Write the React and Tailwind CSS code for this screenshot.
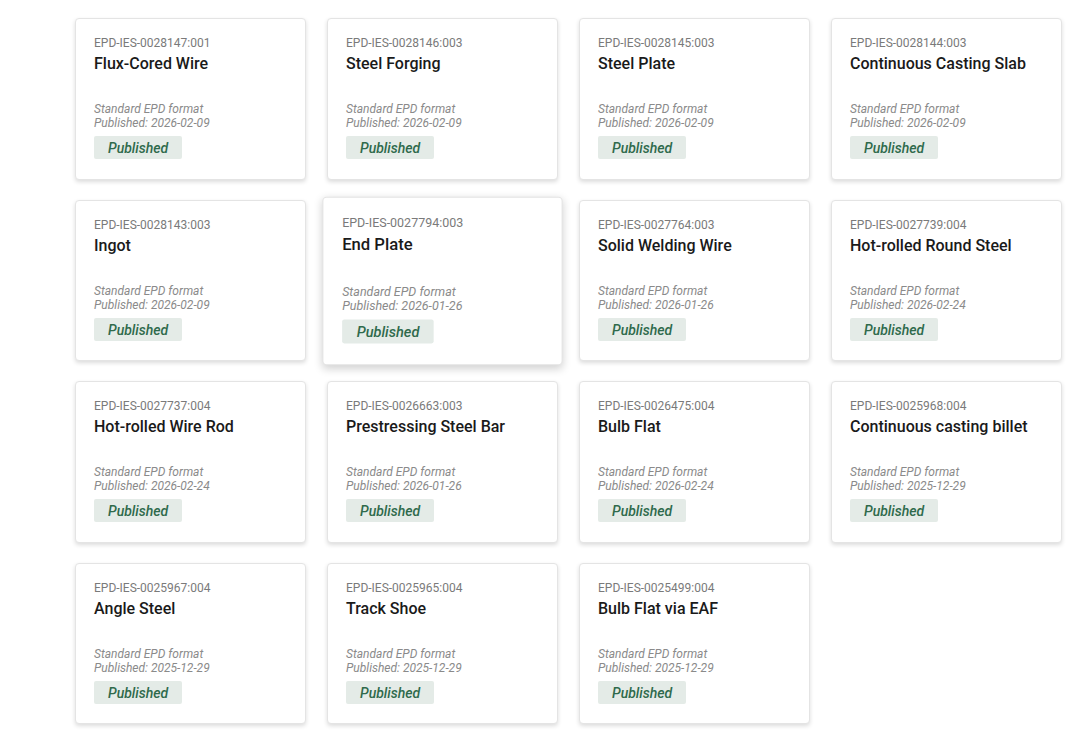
import React from "react";

const items = [
  ["EPD-IES-0028147:001", "Flux-Cored Wire", "2026-02-09"],
  ["EPD-IES-0028146:003", "Steel Forging", "2026-02-09"],
  ["EPD-IES-0028145:003", "Steel Plate", "2026-02-09"],
  ["EPD-IES-0028144:003", "Continuous Casting Slab", "2026-02-09"],
  ["EPD-IES-0028143:003", "Ingot", "2026-02-09"],
  ["EPD-IES-0027794:003", "End Plate", "2026-01-26"],
  ["EPD-IES-0027764:003", "Solid Welding Wire", "2026-01-26"],
  ["EPD-IES-0027739:004", "Hot-rolled Round Steel", "2026-02-24"],
  ["EPD-IES-0027737:004", "Hot-rolled Wire Rod", "2026-02-24"],
  ["EPD-IES-0026663:003", "Prestressing Steel Bar", "2026-01-26"],
  ["EPD-IES-0026475:004", "Bulb Flat", "2026-02-24"],
  ["EPD-IES-0025968:004", "Continuous casting billet", "2025-12-29"],
  ["EPD-IES-0025967:004", "Angle Steel", "2025-12-29"],
  ["EPD-IES-0025965:004", "Track Shoe", "2025-12-29"],
  ["EPD-IES-0025499:004", "Bulb Flat via EAF", "2025-12-29"],
];

function Card({ id, name, date, hovered }) {
  return (
    <div
      className={
        "h-[161.5px] rounded-[4px] border border-[#e4e4e4] bg-white px-[18px] pt-[16px] " +
        (hovered
          ? "relative z-10 scale-[1.04] shadow-[0_3px_8px_rgba(0,0,0,0.18)]"
          : "shadow-[0_2px_4px_rgba(0,0,0,0.14)]")
      }
    >
      <div className="text-[12px] leading-[16px] text-[#7a7a7a]">{id}</div>
      <div className="mt-[1px] text-[16px] leading-[24px] font-medium text-[#1a1a1a]">{name}</div>
      <div className="mt-[26px] text-[12px] leading-[14px] italic text-[#8a8a8a]">
        <div>Standard EPD format</div>
        <div>Published: {date}</div>
      </div>
      <div className="mt-[6px] inline-flex h-[23px] items-center rounded-[2px] bg-[#e4ebe7] px-[14px] pt-[2px] text-[14px] font-medium italic text-[#2f6a4c]">
        Published
      </div>
    </div>
  );
}

export default function App() {
  return (
    <div
      className="min-h-[749px] w-[1080px] bg-white pl-[75px] pt-[18px]"
      style={{ fontFamily: "Roboto, 'Liberation Sans', sans-serif" }}
    >
      <div className="grid w-[987px] grid-cols-[repeat(4,231px)] gap-x-[21px] gap-y-[20px]">
        {items.map(([id, name, date], i) => (
          <Card key={id} id={id} name={name} date={date} hovered={i === 5} />
        ))}
      </div>
    </div>
  );
}
